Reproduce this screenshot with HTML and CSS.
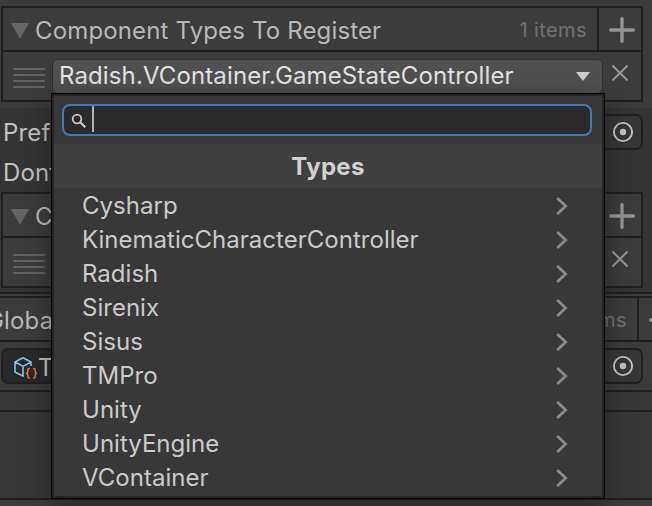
FILE: index.html
```html
<!DOCTYPE html>
<html lang="en">
<head>
<meta charset="utf-8">
<title>Inspector</title>
<link rel="stylesheet" href="styles.css">
</head>
<body>
<svg class="defs" width="0" height="0">
  <symbol id="fold" viewBox="0 0 18 16"><path d="M0 0H18L9 16Z" fill="#656565"/></symbol>
  <symbol id="grip" viewBox="0 0 32 22"><path d="M1 2H31M1 8H31M1 14H31M1 20H31" stroke="#626262" stroke-width="2" stroke-linecap="round"/></symbol>
  <symbol id="plus" viewBox="0 0 26 26"><path d="M13 1.7V24.3M1.7 13H24.3" stroke="#949494" stroke-width="3.4" stroke-linecap="round"/></symbol>
  <symbol id="cross" viewBox="0 0 18 18"><path d="M1.5 1.5L16.5 16.5M16.5 1.5L1.5 16.5" stroke="#979797" stroke-width="2"/></symbol>
  <symbol id="target" viewBox="0 0 22 22"><circle cx="11" cy="11" r="9.1" fill="none" stroke="#c4c4c4" stroke-width="1.9"/><circle cx="11" cy="11" r="3.2" fill="#c4c4c4"/></symbol>
  <symbol id="chev" viewBox="0 0 12 18"><path d="M1.2 1L9.6 9L1.2 17" fill="none" stroke="#8b8b8b" stroke-width="2.8"/></symbol>
</svg>
<main class="inspector">
  <section class="upper">
    <div class="list">
      <header class="list-head">
        <svg class="fold"><use href="#fold"/></svg>
        <span class="list-title">Component Types To Register</span>
        <span class="count">1 items</span>
        <span class="add"><svg class="plus"><use href="#plus"/></svg></span>
      </header>
      <div class="list-row">
        <svg class="grip"><use href="#grip"/></svg>
        <div class="select"><span>Radish.VContainer.GameStateController</span><svg class="caret" viewBox="0 0 14 9"><path d="M0 0H14L7 9Z" fill="#d0d0d0"/></svg></div>
        <svg class="cross"><use href="#cross"/></svg>
      </div>
    </div>
  </section>
  <section class="fields">
    <div class="field"><span class="label">Pref</span><div class="object"><svg class="target"><use href="#target"/></svg></div></div>
    <div class="field second"><span class="label">Dont</span></div>
    <div class="list">
      <header class="list-head">
        <svg class="fold"><use href="#fold"/></svg>
        <span class="list-title">C</span>
        <span class="add"><svg class="plus"><use href="#plus"/></svg></span>
      </header>
      <div class="list-row">
        <svg class="grip"><use href="#grip"/></svg>
        <svg class="cross"><use href="#cross"/></svg>
      </div>
    </div>
  </section>
  <section class="global">
    <header class="list-head global-head">
      <span class="list-title">Globa</span>
      <span class="count">1 items</span>
      <span class="add"><svg class="plus"><use href="#plus"/></svg></span>
    </header>
    <div class="object wide">
      <svg class="prefab" viewBox="0 0 24 24" fill="none" stroke-linejoin="round">
        <path d="M11 20L9.6 19.9L2 16V6L10 1.7L18 6V10M2 6L10 10.4L18 6M10 10.4V19.8" stroke="#81c4ec" stroke-width="1.6"/>
        <path d="M17 12.5H16Q14.8 12.5 14.8 14V15.7Q14.8 17.2 13.3 17.2Q14.8 17.2 14.8 18.7V20.4Q14.8 22 16 22H17M20 12.5H21Q22.2 12.5 22.2 14V15.7Q22.2 17.2 23.6 17.2Q22.2 17.2 22.2 18.7V20.4Q22.2 22 21 22H20" stroke="#e1704b" stroke-width="1.6"/>
      </svg>
      <span>T</span>
      <svg class="target"><use href="#target"/></svg>
    </div>
  </section>
  <div class="strip"></div>
  <div class="blank"></div>
  <div class="footer"></div>
</main>
<aside class="popup">
  <div class="search">
    <svg class="lens" viewBox="0 0 16 16"><circle cx="6" cy="6" r="4.3" fill="none" stroke="#c8c8c8" stroke-width="1.8"/><path d="M9 9L14.3 14.3" stroke="#c8c8c8" stroke-width="2.2"/></svg>
    <i class="cursor"></i>
  </div>
  <h1 class="popup-title">Types</h1>
  <ul class="options">
    <li>Cysharp<svg class="chev"><use href="#chev"/></svg></li>
    <li>KinematicCharacterController<svg class="chev"><use href="#chev"/></svg></li>
    <li>Radish<svg class="chev"><use href="#chev"/></svg></li>
    <li>Sirenix<svg class="chev"><use href="#chev"/></svg></li>
    <li>Sisus<svg class="chev"><use href="#chev"/></svg></li>
    <li>TMPro<svg class="chev"><use href="#chev"/></svg></li>
    <li>Unity<svg class="chev"><use href="#chev"/></svg></li>
    <li>UnityEngine<svg class="chev"><use href="#chev"/></svg></li>
    <li>VContainer<svg class="chev"><use href="#chev"/></svg></li>
  </ul>
</aside>
</body>
</html>
```
FILE: styles.css
```css
* { box-sizing: border-box; }
body {
  margin: 0;
  width: 652px;
  height: 506px;
  overflow: hidden;
  position: relative;
  background: #383838;
  color: #c2c2c2;
  font: 24px/32px Inter, "Liberation Sans", sans-serif;
  letter-spacing: 0.15px;
}
svg { display: block; flex: none; }
.defs { position: absolute; }
.inspector { display: flex; flex-direction: column; height: 506px; }
.upper { height: 108px; padding: 6px 9px 0 1px; background: #3c3c3c; }
.list { border: 2px solid #212121; background: #3c3c3c; }
.list-head { display: flex; align-items: center; height: 44px; border-bottom: 2px solid #212121; padding-left: 8px; }
.fold { width: 18px; height: 16px; margin: 3px 6px 0 0; }
.list-title { flex: 1; color: #b8b8b8; white-space: nowrap; padding-top: 3px; }
.count { color: #717171; font-size: 20px; letter-spacing: 0.4px; padding: 1px 10px 0 0; }
.add { display: flex; align-items: center; width: 44px; height: 42px; border-left: 2px solid #212121; padding-left: 10px; }
.plus { width: 26px; height: 26px; margin-top: 2px; }
.list-row { display: flex; justify-content: space-between; height: 48px; padding: 7px 12px 0 10px; }
.grip { width: 32px; height: 22px; margin-top: 8px; }
.select {
  display: flex;
  align-items: center;
  justify-content: space-between;
  width: 551px;
  height: 35px;
  margin: 0 8px 0 7px;
  padding: 0 12px 1px 6px;
  border: 1px solid #303030;
  border-radius: 6px;
  background: #515151;
  color: #e4e4e4;
  letter-spacing: 0.12px;
  white-space: nowrap;
}
.caret { width: 14px; height: 9px; margin-top: 1px; }
.cross { width: 18px; height: 18px; margin-top: 5px; }
.fields { height: 184px; padding: 6px 9px 0 1px; background: #353535; }
.field { display: flex; align-items: center; height: 36px; padding-left: 2px; }
.label { width: 160px; padding-top: 2px; }
.second { margin: 4px 0 2px; }
.object {
  flex: 1;
  display: flex;
  align-items: center;
  justify-content: flex-end;
  height: 36px;
  padding-right: 7px;
  border: 2px solid #212121;
  border-radius: 7px;
  background: #373737;
}
.target { width: 22px; height: 22px; }
.global { height: 100px; border: solid #212121; border-width: 2px 0; padding-top: 2px; background: #3c3c3c; }
.global-head { height: 46px; border-top: 2px solid #212121; padding-left: 0; }
.global-head .list-title { margin-left: -14px; }
.global-head .add { width: 15px; overflow: hidden; }
.wide { margin: 6px 9px 0 1px; background: linear-gradient(90deg, #292929 580px, #373737 580px); }
.prefab { width: 24px; height: 24px; margin: 3px 0 0 10px; }
.wide span { flex: 1; margin-left: 1px; padding-top: 4px; }
.strip { height: 20px; border-bottom: 2px solid #212121; }
.blank { height: 88px; border-bottom: 2px solid #212121; }
.footer { flex: 1; background: #3c3c3c; }
.popup {
  position: absolute;
  left: 51px;
  top: 93px;
  width: 554px;
  height: 406px;
  border: 1px solid #070707;
  padding: 8px 0 0;
  background: #383838;
  box-shadow: inset 0 0 0 2px #242424, 0 7px 28px rgba(0, 0, 0, 0.38);
  color: #cacaca;
}
.search {
  display: flex;
  margin: 2px 12px 0 10px;
  height: 32px;
  padding: 0 7px;
  border: 2px solid #4877b8;
  border-radius: 8px;
  background: #2a2a2a;
}
.lens { width: 16px; height: 16px; margin: 7px 5px 0 0; }
.cursor { width: 2px; height: 26px; background: #b4b4b4; }
.popup-title {
  margin: 8px 2px 0;
  height: 44px;
  background: #404040;
  color: #d2d2d2;
  font-size: 24px;
  font-weight: 700;
  line-height: 46px;
  text-align: center;
  letter-spacing: 0.3px;
}
.options { list-style: none; margin: 0; padding: 0 36px 0 30px; letter-spacing: 0.02px; }
.options li { display: flex; align-items: center; justify-content: space-between; height: 34px; padding-top: 2px; }
.chev { width: 12px; height: 18px; }
```
